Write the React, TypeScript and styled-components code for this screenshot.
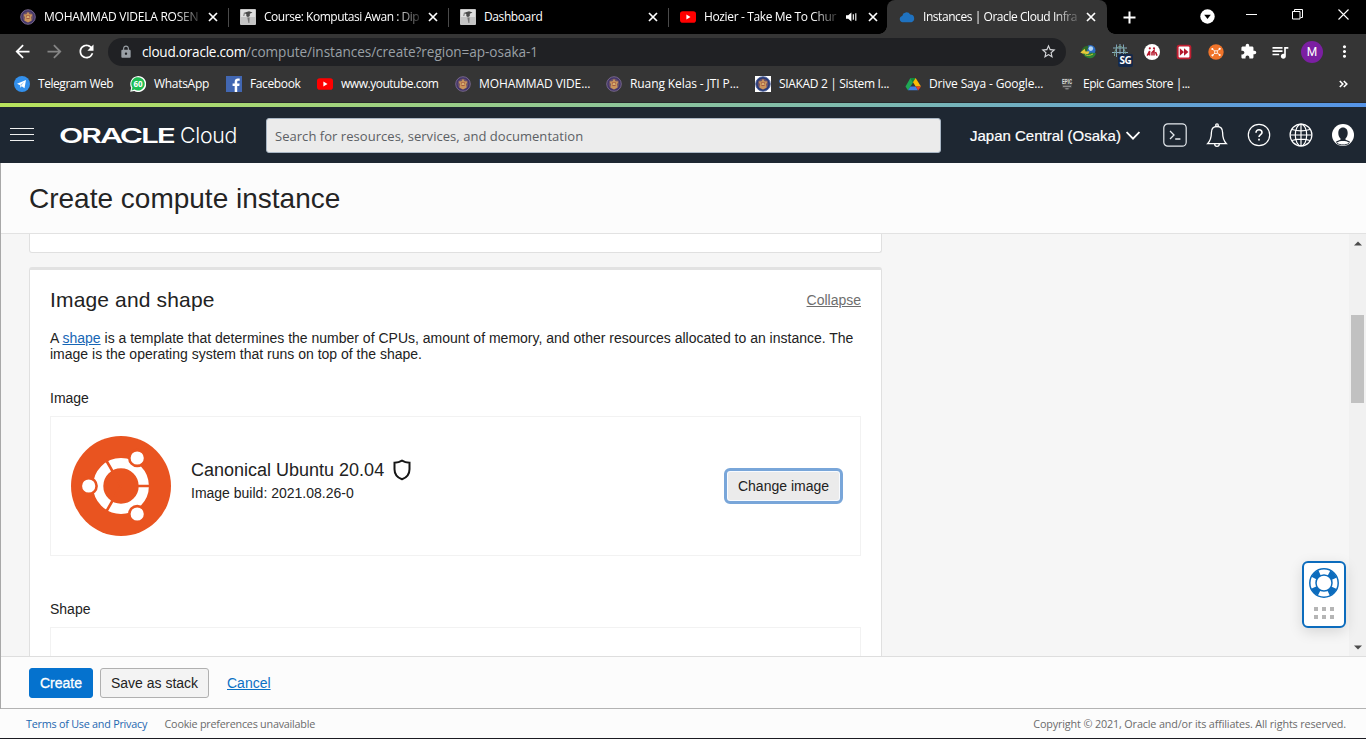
import React from "react";
import styled, { createGlobalStyle, css } from "styled-components";
import {
  MdArrowBack,
  MdArrowForward,
  MdRefresh,
  MdLock,
  MdStarBorder,
  MdExtension,
  MdQueueMusic,
  MdMoreVert,
} from "react-icons/md";

const GlobalStyle = createGlobalStyle`
  * { box-sizing: border-box; }
  html, body { margin: 0; padding: 0; overflow: hidden; }
  body { font-family: "Liberation Sans", Arial, sans-serif; color: #222; }
  svg { display: block; flex: none; }
`;

const uiFont = css`
  font-family: "Open Sans", "Noto Sans", sans-serif;
`;

const Screen = styled.div`
  width: 1366px;
  height: 739px;
  display: flex;
  flex-direction: column;
  overflow: hidden;
`;

/* ---------- browser chrome ---------- */

const TabStrip = styled.div`
  height: 34px;
  flex: none;
  background: #000;
  display: flex;
  padding-left: 8px;
`;

const Tab = styled.div<{ $active?: boolean; $divider?: boolean }>`
  position: relative;
  width: 220px;
  display: flex;
  align-items: center;
  padding: 0 10px 0 12px;
  background: ${(p) => (p.$active ? "#353535" : "transparent")};
  border-radius: 8px 8px 0 0;
  color: #fff;
  ${(p) =>
    p.$divider &&
    css`
      &::after {
        content: "";
        position: absolute;
        right: -1px;
        top: 8px;
        width: 1px;
        height: 19px;
        background: #4a4a4a;
      }
    `}
  ${(p) =>
    p.$active &&
    css`
      margin-left: -1px;
      padding-right: 11px;
      &::before,
      &::after {
        content: "";
        position: absolute;
        bottom: 0;
        width: 8px;
        height: 8px;
      }
      &::before {
        left: -8px;
        background: radial-gradient(circle at 0 0, transparent 7.5px, #353535 8px);
      }
      &::after {
        right: -8px;
        background: radial-gradient(circle at 100% 0, transparent 7.5px, #353535 8px);
      }
    `}
`;

const TabLabel = styled.span<{ $fade?: boolean; $track?: number }>`
  ${uiFont}
  flex: 1;
  min-width: 0;
  margin-left: 8px;
  font-size: 12px;
  line-height: 18px;
  letter-spacing: ${(p) => p.$track ?? -0.2}px;
  white-space: nowrap;
  ${(p) =>
    p.$fade &&
    css`
      mask-image: linear-gradient(to right, #000 calc(100% - 26px), rgba(0, 0, 0, 0.15));
    `}
`;

const TabClose = styled.span`
  margin-left: 7px;
`;

const Speaker = styled.span`
  margin-left: 8px;
  margin-right: 4px;
`;

const NewTab = styled.div`
  margin-left: 16px;
  display: flex;
  align-items: center;
`;

const WindowControls = styled.div`
  margin-left: auto;
  display: flex;
  align-items: center;
`;

const WindowButton = styled.div<{ $w: number }>`
  width: ${(p) => p.$w}px;
  height: 100%;
  display: flex;
  justify-content: center;
  padding-top: 9px;
`;

const Toolbar = styled.div`
  height: 35px;
  flex: none;
  background: #353535;
  display: flex;
  align-items: center;
  padding-left: 6px;
  color: #fff;
`;

const NavButton = styled.div<{ $dim?: boolean }>`
  width: 32px;
  display: flex;
  justify-content: center;
  color: ${(p) => (p.$dim ? "#858585" : "#fff")};
`;

const AddressBar = styled.div`
  ${uiFont}
  margin-left: 6px;
  width: 958px;
  height: 28px;
  border-radius: 14px;
  background: #202124;
  display: flex;
  align-items: center;
  padding: 0 9px 0 11px;
  font-size: 13.6px;
  color: #9aa0a6;
`;

const AddressText = styled.span`
  flex: 1;
  margin-left: 9px;
  letter-spacing: -0.05px;
  line-height: 20px;
`;

const Host = styled.span`
  color: #fff;
  letter-spacing: -0.25px;
`;

const Extensions = styled.div`
  display: flex;
  margin-left: 6px;
`;

const ExtSlot = styled.div`
  position: relative;
  width: 32px;
  height: 28px;
  display: flex;
  align-items: center;
  justify-content: center;
`;

const ExtBadge = styled.span`
  ${uiFont}
  position: absolute;
  left: 14px;
  top: 16px;
  width: 15px;
  height: 13px;
  border-radius: 2px;
  background: #14294a;
  color: #fff;
  font-size: 10px;
  letter-spacing: -0.4px;
  font-weight: 700;
  line-height: 13px;
  text-align: center;
`;

const Avatar = styled.div`
  width: 22px;
  height: 22px;
  border-radius: 50%;
  background: #7b1fa2;
  font: 12px/22px Roboto, sans-serif;
  text-align: center;
`;

const Bookmarks = styled.div`
  height: 34px;
  flex: none;
  background: #353535;
  border-bottom: 1px solid #26282b;
  display: flex;
  align-items: center;
  padding: 0 18px 4px 14px;
  color: #fff;
`;

const Bookmark = styled.div<{ $w: number }>`
  width: ${(p) => p.$w}px;
  flex: none;
  display: flex;
  align-items: center;
  gap: 8px;
`;

const BookmarkLabel = styled.span<{ $track: number }>`
  ${uiFont}
  font-size: 12px;
  line-height: 18px;
  letter-spacing: ${(p) => p.$track}px;
  white-space: nowrap;
`;

const MoreBookmarks = styled.div`
  margin-left: auto;
`;

/* ---------- console header ---------- */

const Stripe = styled.div`
  height: 4px;
  flex: none;
  background: linear-gradient(to right, #b8e35c, #7ab8b4 66%, #5594e8);
`;

const Header = styled.header`
  height: 56px;
  flex: none;
  background: #1e2732;
  display: flex;
  align-items: center;
  padding: 0 11px 0 10px;
`;

const Burger = styled.div`
  width: 24px;
  height: 13px;
  margin-top: -1px;
  display: flex;
  flex-direction: column;
  justify-content: space-between;
`;

const BurgerLine = styled.i`
  height: 1px;
  background: #f0f0f0;
`;

const Brand = styled.div`
  margin-left: 25px;
  width: 182px;
`;

const Search = styled.div`
  ${uiFont}
  margin-left: 25px;
  width: 675px;
  height: 35px;
  border: 1px solid #a9b6c4;
  border-radius: 3px;
  background: #ebebeb;
  color: #5c6064;
  font-size: 13px;
  line-height: 34px;
  padding-left: 8px;
  letter-spacing: 0.04px;
`;

const Region = styled.div`
  margin-left: 29px;
  display: flex;
  align-items: center;
  gap: 5px;
  font-size: 15px;
  letter-spacing: 0;
  color: #fff;
  white-space: nowrap;
  -webkit-text-stroke: 0.2px #fff;
`;

const HeaderIcons = styled.div`
  margin-left: auto;
  display: flex;
  gap: 18px;
`;

/* ---------- page ---------- */

const Page = styled.main`
  flex: 1;
  min-height: 0;
  display: flex;
  flex-direction: column;
  border-left: 1px solid #a8a8a8;
`;

const TitleBar = styled.div`
  height: 71px;
  flex: none;
  background: #fcfcfc;
  border-bottom: 1px solid #e2e2e2;
  padding-left: 28px;
`;

const Title = styled.h1`
  margin: 0;
  font-size: 28px;
  line-height: 71px;
  font-weight: 400;
  color: #242424;
`;

const Body = styled.div`
  position: relative;
  flex: 1;
  min-height: 0;
  display: flex;
  background: #f6f6f6;
`;

const Content = styled.div`
  flex: 1;
  min-width: 0;
  overflow: hidden;
  padding-left: 28px;
`;

const PreviousCard = styled.section`
  width: 853px;
  height: 19px;
  background: #fff;
  border: 1px solid #e0e0e0;
  border-top: 0;
  border-radius: 0 0 3px 3px;
`;

const Card = styled.section`
  margin-top: 14px;
  width: 853px;
  height: 500px;
  background: #fff;
  border: 1px solid #e0e0e0;
  border-top: 3px solid #e2e2e2;
  border-radius: 3px;
  padding: 18px 20px 0;
`;

const CardHead = styled.div`
  display: flex;
  justify-content: space-between;
  align-items: center;
  height: 24px;
`;

const CardTitle = styled.h2`
  margin: 0;
  font-size: 21px;
  font-weight: 400;
  letter-spacing: 0.15px;
`;

const Collapse = styled.a`
  font-size: 14px;
  color: #6e6e6e;
  text-decoration: underline;
`;

const Paragraph = styled.p`
  margin: 18px 0 0;
  font-size: 14px;
  line-height: 16px;
  white-space: nowrap;
`;

const Link = styled.a`
  color: #1766b5;
  text-decoration: underline;
`;

const FieldLabel = styled.div<{ $top: number }>`
  margin-top: ${(p) => p.$top}px;
  font-size: 14px;
  line-height: 16px;
`;

const Panel = styled.div`
  margin-top: 10px;
  height: 140px;
  border: 1px solid #f2f2f2;
  display: flex;
  align-items: center;
  padding: 0 17px 0 20px;
`;

const ImageInfo = styled.div`
  margin-left: 20px;
  flex: 1;
`;

const ImageName = styled.div`
  display: flex;
  align-items: center;
  gap: 8.5px;
  font-size: 18px;
  line-height: 22px;
`;

const ImageBuild = styled.div`
  margin-top: 4px;
  margin-bottom: 12px;
  font-size: 14px;
  line-height: 16px;
`;

const ChangeButton = styled.button`
  width: 119px;
  height: 36px;
  padding: 0;
  border: 3px solid #79a6d9;
  border-radius: 6px;
  background: #ebebeb;
  box-shadow: inset 0 0 0 1px #f8fbff;
  font: 14px "Liberation Sans", Arial, sans-serif;
  color: #222;
`;

const ScrollTrack = styled.div`
  width: 17px;
  background: #f1f1f1;
  display: flex;
  flex-direction: column;
  align-items: center;
  padding: 7px 0 6px;
`;

const ScrollThumb = styled.div`
  width: 13px;
  height: 88px;
  margin-top: 69px;
  margin-bottom: auto;
  background: #c1c1c1;
`;

const HelpWidget = styled.div`
  position: absolute;
  right: 20px;
  top: 327px;
  width: 44px;
  height: 67px;
  border: 2px solid #0c6cbd;
  border-radius: 6px;
  background: #fff;
  box-shadow: 0 4px 14px rgba(0, 0, 0, 0.13);
  display: flex;
  flex-direction: column;
  align-items: center;
  padding-top: 5px;
`;

const Dots = styled.div`
  margin-top: 9px;
  display: grid;
  grid-template-columns: repeat(3, 4px);
  grid-auto-rows: 4px;
  column-gap: 4px;
  row-gap: 4px;
`;

const Dot = styled.i`
  background: #b5b5b5;
`;

const Actions = styled.div`
  height: 53px;
  flex: none;
  background: #fcfcfc;
  border-top: 1px solid #dedede;
  border-bottom: 1px solid #b3b3b3;
  display: flex;
  align-items: center;
  padding-left: 28px;
`;

const ActionButton = styled.button<{ $primary?: boolean }>`
  width: ${(p) => (p.$primary ? 64 : 109)}px;
  height: 30px;
  padding: 0;
  margin-right: 7px;
  border: 1px solid ${(p) => (p.$primary ? "#0572ce" : "#b0b0b0")};
  border-radius: 3px;
  background: ${(p) => (p.$primary ? "#0572ce" : "#f3f3f3")};
  color: ${(p) => (p.$primary ? "#fff" : "#222")};
  font: 14px "Liberation Sans", Arial, sans-serif;
  -webkit-text-stroke: ${(p) => (p.$primary ? "0.3px #fff" : "0")};
`;

const Cancel = styled.a`
  margin-left: 11px;
  font-size: 14px;
  color: #0b70c4;
  text-decoration: underline;
`;

const Footer = styled.footer`
  ${uiFont}
  height: 30px;
  flex: none;
  background: #fcfcfc;
  border-bottom: 1px solid #1b1b22;
  display: flex;
  align-items: center;
  padding: 0 20px 0 26px;
  font-size: 10.8px;
  letter-spacing: -0.24px;
  color: #6b6b6b;
  white-space: nowrap;
`;

const FooterLink = styled.a`
  color: #2467b0;
  margin-right: 17.5px;
`;

const Copyright = styled.span`
  margin-left: auto;
  letter-spacing: -0.14px;
`;

/* ---------- icons ---------- */

const CloseIcon = () => (
  <svg width="10" height="10" viewBox="0 0 10 10" stroke="#fff" strokeWidth="1.7">
    <path d="M1 1l8 8M9 1l-8 8" />
  </svg>
);

const SpeakerIcon = () => (
  <svg width="11" height="10" viewBox="0 0 11 10">
    <path d="M0 3.2h2.2L5.4.6v8.8L2.2 6.8H0z" fill="#fff" />
    <path d="M7.3 2.3v5.4M9.8 1.3v7.4" stroke="#fff" strokeWidth="1.1" />
  </svg>
);

const CrestIcon = ({ boxed }: { boxed?: boolean }) => (
  <svg width="16" height="16" viewBox="0 0 16 16">
    {boxed && <rect width="16" height="16" fill="#fff" />}
    <circle cx="8" cy="8" r="7.3" fill={boxed ? "#263a78" : "#42356b"} stroke={boxed ? "#53669f" : "#7d6c8e"} strokeWidth="0.9" />
    <circle cx="8" cy="8" r="5.4" fill="#6a5167" />
    <path d="M8 2.8l1.5 2.5 3 .3-1.4 2.6.5 3.3L8 13.4l-3.6-1.9.5-3.3-1.4-2.6 3-.3z" fill="#c9935a" />
    <path d="M6 7h4M6.4 9.3h3.2" stroke="#9d4c3c" />
    <circle cx="8" cy="8" r="1" fill="#e0c27c" />
  </svg>
);

const MoodleIcon = () => (
  <svg width="16" height="16" viewBox="0 0 16 16">
    <rect width="16" height="16" rx="1" fill="#c4c4c4" />
    <rect x="1" y="1" width="14" height="7" fill="#e0e0e0" />
    <path d="M3.5 4l5.5-1.8 3.5 1.2-2.7 1.4v2C9.2 8.3 7 8.3 6.3 6.9V4.9z" fill="#4a4a4a" />
    <path d="M4.3 4.2L3.8 7" stroke="#555" strokeWidth="0.8" />
    <path d="M7.3 8.5l1.2 5.5h.9l.2-5.5z" fill="#777" />
  </svg>
);

const YoutubeIcon = () => (
  <svg width="16" height="16" viewBox="0 0 16 16">
    <rect y="2.3" width="16" height="11.4" rx="2.8" fill="#f00" />
    <path d="M6.4 5.6v4.8l4.1-2.4z" fill="#fff" />
  </svg>
);

const OracleCloudIcon = () => (
  <svg width="16" height="16" viewBox="0 0 16 16">
    <path d="M3.7 13.2a3.2 3.2 0 0 1-.5-6.3 4.3 4.3 0 0 1 8-1.3 3.9 3.9 0 0 1 1.3 7.6z" fill="#1f72c0" />
  </svg>
);

const TelegramIcon = () => (
  <svg width="16" height="16" viewBox="0 0 16 16">
    <circle cx="8" cy="8" r="8" fill="#3390ec" />
    <path d="M3 7.8l9-3.8-1.5 8.3-2.8-2-1.3 1.4-.3-2.5z" fill="#fff" />
    <path d="M6.2 9.1l3.9-3.3-2.8 4z" fill="#8fc4f5" />
  </svg>
);

const WhatsAppIcon = () => (
  <svg width="16" height="16" viewBox="0 0 16 16">
    <path d="M.2 15.8l1-4A8 8 0 1 1 4.3 15z" fill="#fff" />
    <path d="M1.6 14.4l.8-2.9A6.7 6.7 0 1 1 4.6 13.6z" fill="#1fbd53" />
    <text x="8.1" y="11" textAnchor="middle" fontFamily="Open Sans" fontSize="8" fontWeight="700" fill="#fff">60</text>
  </svg>
);

const FacebookIcon = () => (
  <svg width="16" height="16" viewBox="0 0 16 16">
    <rect width="16" height="16" fill="#4267b2" />
    <path d="M8.7 16V9.9H6.6V7.5h2.1V5.8C8.7 3.6 10 2.5 11.9 2.5l1.8.1v2.2h-1.2c-1 0-1.3.5-1.3 1.2v1.5h2.4l-.3 2.4h-2.1V16z" fill="#fff" />
  </svg>
);

const DriveIcon = () => (
  <svg width="16" height="16" viewBox="0 0 16 16">
    <path d="M5.4 2h5.2L8 6.5z" fill="#0f8a3c" />
    <path d="M5.4 2L8 6.5 3 14.6.5 10.4z" fill="#1fa855" />
    <path d="M10.6 2L16 10.4h-5.3L8 6.2z" fill="#fbbc05" />
    <path d="M5.5 10.4h5.2L13 14.3H3z" fill="#3f7fe8" />
    <path d="M10.7 10.4H16l-2.8 4z" fill="#e5402f" />
  </svg>
);

const EpicIcon = () => (
  <svg width="16" height="16" viewBox="0 0 16 16" overflow="visible">
    <path d="M3 2.2h10v9.3L8 13.8l-5-2.3z" fill="#474747" />
    <text x="3" y="8.4" fontFamily="Liberation Sans" fontSize="7" fontWeight="700" textLength="10" lengthAdjust="spacingAndGlyphs" fill="#ddd">EPIC</text>
    <path d="M4 10.3h8M6.4 12.8h3.2" stroke="#aaa" strokeWidth="0.9" />
  </svg>
);

const DownloadGlobeIcon = () => (
  <svg width="16" height="16" viewBox="0 0 16 16">
    <circle cx="10.3" cy="6.3" r="5.2" fill="#2a6cc4" />
    <circle cx="10.8" cy="4.6" r="2.3" fill="#b3d4f2" />
    <path d="M1.5 6.5C2.5 2.8 6 1.2 8.6 2.4L6.6 8l-4 1z" fill="#2d6a28" />
    <path d="M.3 8.4l4.4-3.6.8 2.6 4-.2-.8 2.4-3 1.4z" fill="#e8c93a" />
    <path d="M3 9.6l5 .6 3-1.8 5 .8c-1 3.2-3 5-6 5-3.2 0-6-1.6-7-4.600z" fill="#2c8034" />
    <path d="M5 10.600c2 1.200 5 1.200 8-.6" fill="none" stroke="#c6c63a" />
  </svg>
);

const VpnGridIcon = () => (
  <svg width="16" height="16" viewBox="0 0 16 16" fill="none" strokeWidth="1">
    <path d="M8 0v14M1 4h14M0 8.5h16" stroke="#86aec0" />
    <path d="M4.5 .5v12.5M11.5 .5v12.500" stroke="#7da1b8" />
    <path d="M2.5 12c0-7 3-9.500 5.500-9.500s5.500 2.500 5.500 9.500" stroke="#7aa68e" />
  </svg>
);

const PeopleIcon = () => (
  <svg width="16" height="16" viewBox="0 0 16 16">
    <circle cx="8" cy="8" r="8" fill="#fff" />
    <g fill="#b5162b">
      <circle cx="5.8" cy="4.3" r="1.1" />
      <circle cx="10" cy="4.3" r="1.1" />
    </g>
    <path d="M3.2 11.6L5.6 7v4.6M8 11.6V8.5l2-2v5.1M11.5 8l1.5 3.6" fill="none" stroke="#b5162b" strokeWidth="1.5" />
  </svg>
);

const FastForwardIcon = () => (
  <svg width="16" height="16" viewBox="0 0 16 16">
    <rect x="0.7" y="0.7" width="14.6" height="14.6" rx="2.5" fill="#c01f31" />
    <rect x="2.6" y="2.6" width="10.8" height="10.8" rx="1" fill="#fff" />
    <path d="M3.8 4.3L8 8l-4.2 3.7zM8 4.3L12.4 8 8 11.7z" fill="#b4182b" />
  </svg>
);

const HubIcon = () => (
  <svg width="16" height="16" viewBox="0 0 16 16">
    <circle cx="8" cy="8" r="7.7" fill="#f0742a" />
    <path d="M4.5 5.2l2.5 2M11.5 5L9 7.2M4.7 11.2L7 9M11.5 10.7L9.2 9" stroke="#fff" strokeWidth="0.9" />
    <circle cx="8" cy="8.1" r="1.5" fill="none" stroke="#fff" strokeWidth="0.8" />
    <g fill="#fff">
      <circle cx="4.3" cy="5" r="1" />
      <circle cx="11.7" cy="4.8" r="1.1" />
      <circle cx="4.5" cy="11.3" r="1.1" />
      <circle cx="11.7" cy="11" r="1" />
    </g>
  </svg>
);

const BrandLogo = () => (
  <svg width="182" height="24" viewBox="0 0 182 24" fill="#fff">
    <text x="0" y="20" fontFamily="Inter, sans-serif" fontSize="20.5" fontWeight="600" letterSpacing="-1.3" textLength="115" lengthAdjust="spacingAndGlyphs">ORACLE</text>
    <text x="121" y="20" fontFamily="Inter, sans-serif" fontSize="21.5" fontWeight="300" letterSpacing="-0.3" textLength="57" lengthAdjust="spacingAndGlyphs">Cloud</text>
  </svg>
);

const ChevronIcon = () => (
  <svg width="14" height="9" viewBox="0 0 14 9" fill="none" stroke="#fff" strokeWidth="1.8">
    <path d="M.6 1L7 7.7 13.4 1" />
  </svg>
);

const ShellIcon = () => (
  <svg width="24" height="24" viewBox="0 0 24 24" fill="none" stroke="#e6eaee" strokeWidth="1.2">
    <rect x="0.8" y="0.8" width="22.4" height="22.4" rx="4" />
    <path d="M7 8l4 4-4 4M12.2 16h5.2" strokeWidth="1.3" />
  </svg>
);

const BellIcon = () => (
  <svg width="24" height="24" viewBox="0 0 24 24" fill="none" stroke="#fff" strokeWidth="1.3">
    <circle cx="12" cy="2.2" r="1.3" />
    <path d="M12 3.5c-3.7 0-5.6 2.7-5.6 6 0 5.5-1 8.2-3.8 11.2h18.8c-2.8-3-3.8-5.7-3.8-11.2 0-3.3-1.9-6-5.6-6z" />
    <path d="M9.7 21a2.3 2.3 0 0 0 4.6 0" />
  </svg>
);

const HelpIcon = () => (
  <svg width="24" height="24" viewBox="0 0 24 24" fill="none" stroke="#fff">
    <circle cx="12" cy="12" r="10.7" strokeWidth="1.2" />
    <path d="M9 9.7c0-1.9 1.3-3 3-3s3 1.1 3 2.7c0 2.2-3 2.3-3 4.6" strokeWidth="1.6" />
    <path d="M12 15.7v1.8" strokeWidth="1.7" />
  </svg>
);

const GlobeIcon = () => (
  <svg width="24" height="24" viewBox="0 0 24 24" fill="none" stroke="#fff" strokeWidth="1.2">
    <circle cx="12" cy="12" r="10.9" />
    <ellipse cx="12" cy="12" rx="5.7" ry="10.9" />
    <path d="M12 1v22M1 12h22M3 6.5c5 1.5 13 1.5 18 0M3 17.5c5-1.5 13-1.5 18 0" />
  </svg>
);

const UserIcon = () => (
  <svg width="24" height="24" viewBox="0 0 24 24">
    <circle cx="12" cy="12" r="11" fill="#fff" />
    <path d="M12 4.6c3 0 4.700 2.300 4.700 5.300 0 2.300-.9 4.400-2.200 5.500v1.300c1.700.6 3.700 1.200 4.700 2.300l-.8.7c-1.800-1.300-4-1.700-6.400-1.700s-4.600.4-6.400 1.700l-.8-.7c1-1.100 3-1.700 4.700-2.300v-1.300c-1.300-1.100-2.200-3.200-2.200-5.500 0-3 1.700-5.300 4.700-5.300z" fill="#1e2732" />
    <path d="M6 20.400c3.500 2 8.500 2 12 0" fill="none" stroke="#1e2732" strokeWidth="0.900" />
  </svg>
);

const UbuntuIcon = () => (
  <svg width="100" height="100" viewBox="0 0 100 100">
    <circle cx="50" cy="50" r="50" fill="#e95420" />
    <circle cx="50" cy="50" r="22.8" fill="none" stroke="#fff" strokeWidth="10.2" />
    <path d="M50 50h30M50 50L35 24M50 50L35 76" stroke="#e95420" strokeWidth="2.6" />
    <g fill="#fff" stroke="#e95420" strokeWidth="2.6">
      <circle cx="17.7" cy="50" r="7.9" />
      <circle cx="66.2" cy="22" r="7.9" />
      <circle cx="66.2" cy="78" r="7.9" />
    </g>
  </svg>
);

const ShieldIcon = () => (
  <svg width="18" height="22" viewBox="0 0 18 22" fill="none" stroke="#161616" strokeWidth="2">
    <path d="M9 1.6C6.8 3 4.2 3.6 1.5 3.7v6.5c0 4.6 2.6 8.300 7.5 10.100 4.900-1.800 7.500-5.500 7.500-10.100V3.700C13.800 3.600 11.200 3 9 1.600z" />
  </svg>
);

const LifebuoyIcon = () => (
  <svg width="30" height="30" viewBox="0 0 30 30" fill="none" stroke="#0c6cbd">
    <circle cx="15" cy="15" r="11" strokeWidth="6" strokeDasharray="7.6 9.68" strokeDashoffset="-4.84" />
    <circle cx="15" cy="15" r="14.2" strokeWidth="1.5" />
    <circle cx="15" cy="15" r="8" strokeWidth="1.5" />
  </svg>
);

const ScrollArrow = ({ down }: { down?: boolean }) => (
  <svg width="8" height="5" viewBox="0 0 8 5">
    <path d={down ? "M0 .5h8L4 4.5z" : "M0 4.5h8L4 .5z"} fill="#4c4c4c" />
  </svg>
);

const MoreBookmarksIcon = () => (
  <svg width="9" height="8" viewBox="0 0 9 8" fill="none" stroke="#fff" strokeWidth="1.6">
    <path d="M.8 1l3 3-3 3M4.8 1l3 3-3 3" />
  </svg>
);

/* ---------- data ---------- */

const tabs = [
  { icon: <CrestIcon />, label: "MOHAMMAD VIDELA ROSEN", fade: true, track: -0.25 },
  { icon: <MoodleIcon />, label: "Course: Komputasi Awan : Dip", fade: true, track: -0.47 },
  { icon: <MoodleIcon />, label: "Dashboard", fade: false, track: -0.4 },
  { icon: <YoutubeIcon />, label: "Hozier - Take Me To Chur", fade: true, track: -0.36, sound: true },
];

const bookmarks = [
  { icon: <TelegramIcon />, label: "Telegram Web", w: 116, track: -0.45 },
  { icon: <WhatsAppIcon />, label: "WhatsApp", w: 96, track: -0.3 },
  { icon: <FacebookIcon />, label: "Facebook", w: 91, track: -0.38 },
  { icon: <YoutubeIcon />, label: "www.youtube.com", w: 138, track: -0.48 },
  { icon: <CrestIcon />, label: "MOHAMMAD VIDE...", w: 151, track: -0.1 },
  { icon: <CrestIcon />, label: "Ruang Kelas - JTI P...", w: 149, track: -0.1 },
  { icon: <CrestIcon boxed />, label: "SIAKAD 2 | Sistem I...", w: 150, track: -0.33 },
  { icon: <DriveIcon />, label: "Drive Saya - Google...", w: 154, track: -0.14 },
  { icon: <EpicIcon />, label: "Epic Games Store |...", w: 140, track: -0.48 },
];

export default function App() {
  return (
    <Screen>
      <GlobalStyle />
      <TabStrip>
        {tabs.map((t, i) => (
          <Tab key={t.label} $divider={i < 3}>
            {t.icon}
            <TabLabel $fade={t.fade} $track={t.track}>{t.label}</TabLabel>
            {t.sound && (
              <Speaker>
                <SpeakerIcon />
              </Speaker>
            )}
            <TabClose>
              <CloseIcon />
            </TabClose>
          </Tab>
        ))}
        <Tab $active>
          <OracleCloudIcon />
          <TabLabel $fade $track={-0.44}>Instances | Oracle Cloud Infra</TabLabel>
          <TabClose>
            <CloseIcon />
          </TabClose>
        </Tab>
        <NewTab>
          <svg width="13" height="13" viewBox="0 0 13 13" stroke="#fff" strokeWidth="2">
            <path d="M6.5 .5v12M.5 6.5h12" />
          </svg>
        </NewTab>
        <WindowControls>
          <WindowButton $w={42}>
            <svg width="15" height="15" viewBox="0 0 15 15">
              <circle cx="7.5" cy="7.5" r="7.2" fill="#fff" />
              <path d="M4.2 5.8h6.6L7.5 10z" fill="#000" />
            </svg>
          </WindowButton>
          <WindowButton $w={46}>
            <svg width="11" height="11" viewBox="0 0 11 11" stroke="#fff">
              <path d="M0 5.5h11" />
            </svg>
          </WindowButton>
          <WindowButton $w={46}>
            <svg width="11" height="11" viewBox="0 0 11 11" fill="none" stroke="#fff">
              <path d="M.5 2.5h7.5v7.5h-7.5zM2.5 2.5v-2h8v8h-2" />
            </svg>
          </WindowButton>
          <WindowButton $w={46}>
            <svg width="11" height="11" viewBox="0 0 11 11" stroke="#fff" strokeWidth="1.1">
              <path d="M.5 .5l10 10M10.5 .5l-10 10" />
            </svg>
          </WindowButton>
        </WindowControls>
      </TabStrip>

      <Toolbar>
        <NavButton><MdArrowBack size={21} /></NavButton>
        <NavButton $dim><MdArrowForward size={21} /></NavButton>
        <NavButton><MdRefresh size={21} /></NavButton>
        <AddressBar>
          <MdLock size={14} />
          <AddressText>
            <Host>cloud.oracle.com</Host>/compute/instances/create?region=ap-osaka-1
          </AddressText>
          <MdStarBorder size={17} color="#d5d7da" />
        </AddressBar>
        <Extensions>
          <ExtSlot><DownloadGlobeIcon /></ExtSlot>
          <ExtSlot><VpnGridIcon /><ExtBadge>SG</ExtBadge></ExtSlot>
          <ExtSlot><PeopleIcon /></ExtSlot>
          <ExtSlot><FastForwardIcon /></ExtSlot>
          <ExtSlot><HubIcon /></ExtSlot>
          <ExtSlot><MdExtension size={17} /></ExtSlot>
          <ExtSlot><MdQueueMusic size={20} /></ExtSlot>
          <ExtSlot><Avatar>M</Avatar></ExtSlot>
          <ExtSlot><MdMoreVert size={19} /></ExtSlot>
        </Extensions>
      </Toolbar>

      <Bookmarks>
        {bookmarks.map((b) => (
          <Bookmark key={b.label} $w={b.w}>
            {b.icon}
            <BookmarkLabel $track={b.track}>{b.label}</BookmarkLabel>
          </Bookmark>
        ))}
        <MoreBookmarks><MoreBookmarksIcon /></MoreBookmarks>
      </Bookmarks>

      <Stripe />
      <Header>
        <Burger><BurgerLine /><BurgerLine /><BurgerLine /></Burger>
        <Brand><BrandLogo /></Brand>
        <Search>Search for resources, services, and documentation</Search>
        <Region>Japan Central (Osaka)<ChevronIcon /></Region>
        <HeaderIcons>
          <ShellIcon />
          <BellIcon />
          <HelpIcon />
          <GlobeIcon />
          <UserIcon />
        </HeaderIcons>
      </Header>

      <Page>
        <TitleBar><Title>Create compute instance</Title></TitleBar>
        <Body>
          <Content>
            <PreviousCard />
            <Card>
              <CardHead>
                <CardTitle>Image and shape</CardTitle>
                <Collapse>Collapse</Collapse>
              </CardHead>
              <Paragraph>
                A <Link>shape</Link> is a template that determines the number of CPUs, amount of memory, and other resources allocated to an instance. The
                <br />
                image is the operating system that runs on top of the shape.
              </Paragraph>
              <FieldLabel $top={28}>Image</FieldLabel>
              <Panel>
                <UbuntuIcon />
                <ImageInfo>
                  <ImageName>Canonical Ubuntu 20.04<ShieldIcon /></ImageName>
                  <ImageBuild>Image build: 2021.08.26-0</ImageBuild>
                </ImageInfo>
                <ChangeButton>Change image</ChangeButton>
              </Panel>
              <FieldLabel $top={45}>Shape</FieldLabel>
              <Panel />
            </Card>
          </Content>
          <ScrollTrack>
            <ScrollArrow />
            <ScrollThumb />
            <ScrollArrow down />
          </ScrollTrack>
          <HelpWidget>
            <LifebuoyIcon />
            <Dots><Dot /><Dot /><Dot /><Dot /><Dot /><Dot /></Dots>
          </HelpWidget>
        </Body>
        <Actions>
          <ActionButton $primary>Create</ActionButton>
          <ActionButton>Save as stack</ActionButton>
          <Cancel>Cancel</Cancel>
        </Actions>
      </Page>
      <Footer>
        <FooterLink>Terms of Use and Privacy</FooterLink>
        <span>Cookie preferences unavailable</span>
        <Copyright>Copyright © 2021, Oracle and/or its affiliates. All rights reserved.</Copyright>
      </Footer>
    </Screen>
  );
}
